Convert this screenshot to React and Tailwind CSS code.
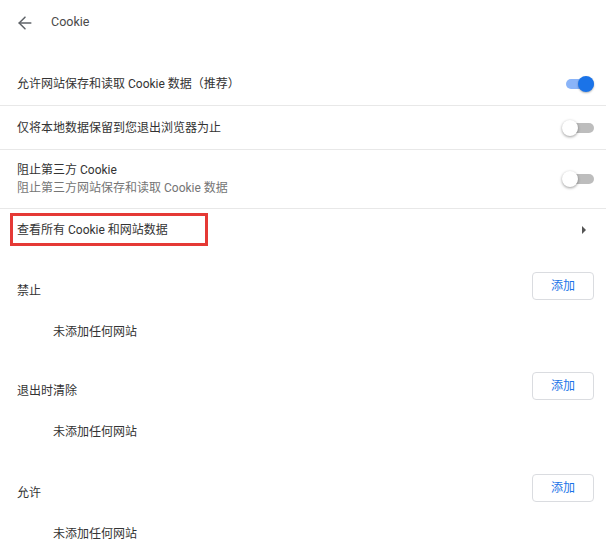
import React from "react";
import { ArrowLeft } from "lucide-react";

function Toggle({ on }) {
  return (
    <div className="relative w-[32px] h-4 shrink-0">
      <div
        className={
          "absolute left-[4px] top-[3px] w-[28px] h-[10px] rounded-full " +
          (on ? "bg-[#8ab4f8]" : "bg-[#bdbdbd]")
        }
      />
      {on ? (
        <div className="absolute right-0 top-0 size-4 rounded-full bg-[#1a73e8] shadow-[0_1px_2px_rgba(0,0,0,0.3)]" />
      ) : (
        <div className="absolute left-0 top-0 size-4 rounded-full bg-white shadow-[0_1px_3px_rgba(0,0,0,0.4)]" />
      )}
    </div>
  );
}

function Section({ label, extraTop }) {
  return (
    <div className={"flex flex-col pb-[30px] " + (extraTop || "")}>
      <div className="flex items-center justify-between h-[28px] pl-[17px] pr-[12px]">
        <span className="pt-[9px] text-[#333]">{label}</span>
        <button className="w-[62px] h-[28px] rounded-[4px] border border-[#dadce0] bg-white text-[#1a73e8] text-[12px]">
          添加
        </button>
      </div>
      <div className="mt-[22px] h-[20px] leading-[20px] pl-[53px] text-[#333]">
        未添加任何网站
      </div>
    </div>
  );
}

export default function App() {
  return (
    <div
      className="w-[606px] h-[544px] overflow-hidden bg-white text-[12px] text-[#333]"
      style={{ fontFamily: 'Roboto, "Noto Sans CJK SC", sans-serif' }}
    >
      <div className="flex items-center h-[45px]">
        <ArrowLeft size={20} strokeWidth={1.8} className="ml-[15px] text-[#5f6368]" />
        <span className="ml-[16px] text-[12.5px] text-[#4a4a4a]">Cookie</span>
      </div>
      <div className="h-[18px]" />
      <div className="flex items-center justify-between h-[43px] pl-[17px] pr-[12px] border-b border-[#e8e8e8]">
        <span>允许网站保存和读取 Cookie 数据（推荐）</span>
        <Toggle on />
      </div>
      <div className="flex items-center justify-between h-[44px] pl-[17px] pr-[12px] border-b border-[#e8e8e8]">
        <span>仅将本地数据保留到您退出浏览器为止</span>
        <Toggle />
      </div>
      <div className="flex items-center justify-between h-[59px] pl-[17px] pr-[12px] border-b border-[#e8e8e8]">
        <div className="flex flex-col leading-[18px]">
          <span>阻止第三方 Cookie</span>
          <span className="text-[#757575]">阻止第三方网站保存和读取 Cookie 数据</span>
        </div>
        <Toggle />
      </div>
      <div className="flex items-center justify-between h-[41px] pl-[10px] pr-[20px]">
        <div className="flex items-center w-[198px] h-[33px] border-[3px] border-[#e53935] pl-[4px]">
          <span>查看所有 Cookie 和网站数据</span>
        </div>
        <div className="w-0 h-0 border-y-[4px] border-y-transparent border-l-[4px] border-l-[#555]" />
      </div>
      <div className="h-[22px]" />
      <Section label="禁止" />
      <Section label="退出时清除" />
      <Section label="允许" extraTop="mt-[2px]" />
    </div>
  );
}
